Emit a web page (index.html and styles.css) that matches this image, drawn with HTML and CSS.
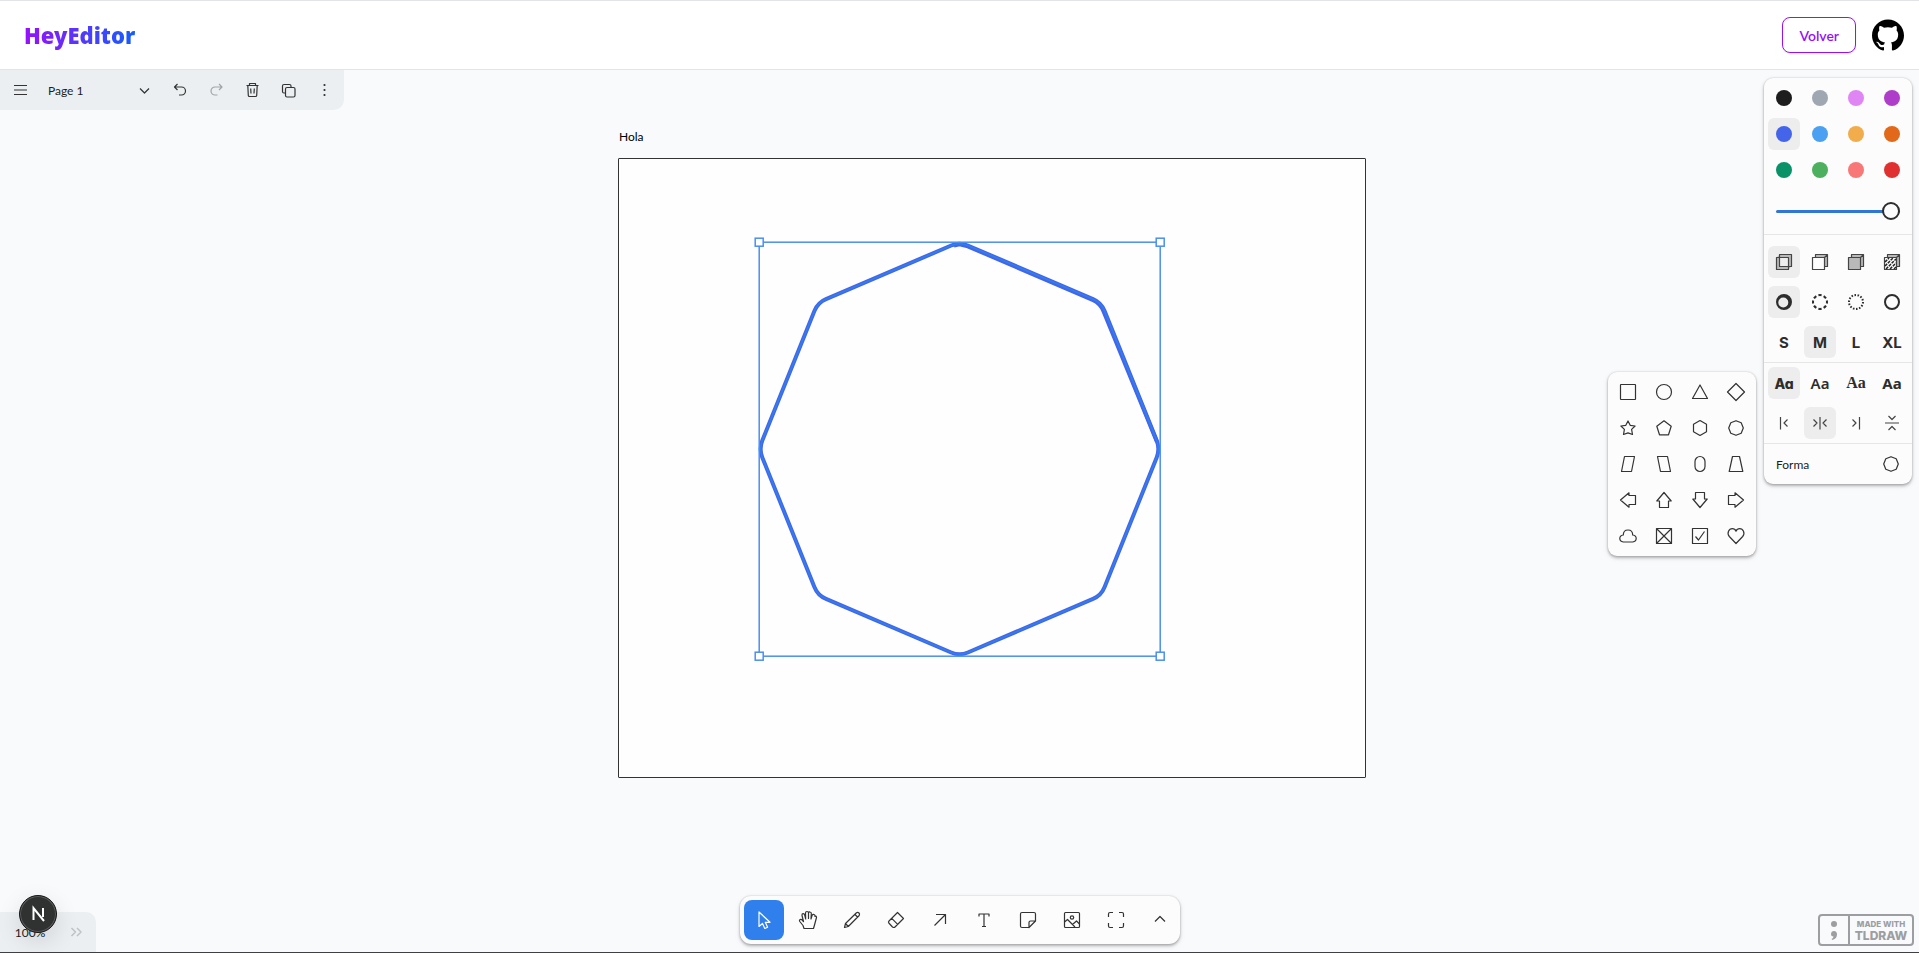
FILE: index.html
```
<!DOCTYPE html>
<html lang="es">
<head>
<meta charset="utf-8">
<title>HeyEditor</title>
<link rel="stylesheet" href="styles.css">
</head>
<body>
<header class="header">
  <a class="brand" href="#">HeyEditor</a>
  <div class="header-actions">
    <button class="back" type="button">Volver</button>
    <a class="github" href="#" aria-label="GitHub"><svg viewBox="0 0 24 24"><path d="M12 .297c-6.63 0-12 5.373-12 12 0 5.303 3.438 9.8 8.205 11.385.6.113.82-.258.82-.577 0-.285-.01-1.04-.015-2.04-3.338.724-4.042-1.61-4.042-1.61C4.422 18.07 3.633 17.7 3.633 17.7c-1.087-.744.084-.729.084-.729 1.205.084 1.838 1.236 1.838 1.236 1.07 1.835 2.809 1.305 3.495.998.108-.776.417-1.305.76-1.605-2.665-.3-5.466-1.332-5.466-5.93 0-1.31.465-2.38 1.235-3.22-.135-.303-.54-1.523.105-3.176 0 0 1.005-.322 3.3 1.23.96-.267 1.98-.399 3-.405 1.02.006 2.04.138 3 .405 2.28-1.552 3.285-1.23 3.285-1.23.645 1.653.24 2.873.12 3.176.765.84 1.23 1.91 1.23 3.22 0 4.61-2.805 5.625-5.475 5.92.42.36.81 1.096.81 2.22 0 1.606-.015 2.896-.015 3.286 0 .315.21.69.825.57C20.565 22.092 24 17.592 24 12.297c0-6.627-5.373-12-12-12"/></svg></a>
  </div>
</header>
<main class="editor">
  <div class="canvas">
    <div class="frame-label">Hola</div>
    <div class="frame"></div>
    <svg class="shape" viewBox="0 0 420 432">
      <path class="outline" d="M217.8 12.5L343 66.1Q351.3 69.6 354.6 78L406.7 207.6Q410 216 406.7 224.4L354.6 354Q351.3 362.4 343 365.9L217.8 419.5Q209.5 423 201.2 419.5L76 365.9Q67.7 362.4 64.4 354L12.3 224.4Q9 216 12.3 207.6L64.4 78Q67.7 69.6 76 66.1L201.2 12.5Q209.5 9 217.8 12.5Z"/>
      <path class="outline" d="M204 12.500L209.500 11.300L217.8 13.300L342.600 67Q350.500 70.500 353.600 78.500L407 209"/>
      <path class="inner" d="M217.8 12.5L343 66.1Q351.3 69.6 354.6 78L406.7 207.6Q410 216 406.7 224.4L354.6 354Q351.3 362.4 343 365.9L217.8 419.5Q209.5 423 201.2 419.5L76 365.9Q67.7 362.4 64.4 354L12.3 224.4Q9 216 12.3 207.6L64.4 78Q67.7 69.6 76 66.1L201.2 12.5Q209.5 9 217.8 12.5Z"/>
      <g class="selection"><rect x="9.2" y="9.2" width="401" height="414"/><rect class="handle" x="5.2" y="5.2" width="8" height="8"/><rect class="handle" x="406.2" y="5.2" width="8" height="8"/><rect class="handle" x="5.2" y="419.2" width="8" height="8"/><rect class="handle" x="406.2" y="419.2" width="8" height="8"/></g>
    </svg>
  </div>

  <nav class="menu-bar" aria-label="Menu">
    <button class="menu-main" type="button" aria-label="Menu"><svg class="icon" viewBox="0 0 24 24"><path d="M6 7.500H19M6 12H19M6 16.500H19"/></svg></button>
    <button class="page-menu" type="button"><span>Page 1</span><svg class="icon" viewBox="0 0 24 24"><path d="M8 10.500L12.500 15L17 10.500"/></svg></button>
    <button class="menu-btn" type="button" aria-label="Undo"><svg class="icon" viewBox="0 0 24 24"><path d="M9.500 6L6.500 9L9.500 12M6.500 9H13.500A4 4 0 0 1 13.500 17H11"/></svg></button>
    <button class="menu-btn" type="button" aria-label="Redo" disabled><svg class="icon" viewBox="0 0 24 24"><path d="M15 6L18 9L15 12M18 9H11A4 4 0 0 0 11 17H13.500"/></svg></button>
    <button class="menu-btn" type="button" aria-label="Delete"><svg class="icon" viewBox="0 0 24 24"><path d="M6.500 7.500H18.500M9.500 7.500V5.500H15.500V7.500M7.800 7.500L8.300 17.500Q8.300 18.500 9.500 18.500H15.500Q16.600 18.500 16.700 17.500L17.200 7.500M10.700 10.500L11 15.500M14.300 10.500L14 15.500"/></svg></button>
    <button class="menu-btn" type="button" aria-label="Duplicate"><svg class="icon" viewBox="0 0 24 24"><rect x="9.500" y="9.500" width="9.500" height="9.500" rx="1.500"/><path d="M9.500 15H8Q6.500 15 6.500 13.500V8Q6.500 6.500 8 6.500H13.500Q15 6.500 15 8V9.500"/></svg></button>
    <button class="menu-btn" type="button" aria-label="More"><svg class="icon solid" viewBox="0 0 24 24"><circle cx="12.500" cy="7" r="1.100"/><circle cx="12.500" cy="12" r="1.100"/><circle cx="12.500" cy="17" r="1.100"/></svg></button>
  </nav>

  <aside class="style-panel" aria-label="Styles">
    <section class="colors">
      <div class="grid tight">
        <button class="cell" type="button" aria-label="Black"><span class="dot black"></span></button>
        <button class="cell" type="button" aria-label="Grey"><span class="dot grey"></span></button>
        <button class="cell" type="button" aria-label="Light violet"><span class="dot light-violet"></span></button>
        <button class="cell" type="button" aria-label="Violet"><span class="dot violet"></span></button>
        <button class="cell active" type="button" aria-label="Blue"><span class="dot blue"></span></button>
        <button class="cell" type="button" aria-label="Light blue"><span class="dot light-blue"></span></button>
        <button class="cell" type="button" aria-label="Yellow"><span class="dot yellow"></span></button>
        <button class="cell" type="button" aria-label="Orange"><span class="dot orange"></span></button>
        <button class="cell" type="button" aria-label="Green"><span class="dot green"></span></button>
        <button class="cell" type="button" aria-label="Light green"><span class="dot light-green"></span></button>
        <button class="cell" type="button" aria-label="Light red"><span class="dot light-red"></span></button>
        <button class="cell" type="button" aria-label="Red"><span class="dot red"></span></button>
      </div>
      <input class="opacity" type="range" min="0" max="100" value="100" aria-label="Opacity">
    </section>
    <section class="grid strokes">
      <button class="cell active" type="button" aria-label="No fill"><svg class="icon" viewBox="0 0 24 24"><path class="shade" fill-rule="evenodd" d="M8 4.500H19.500V16L16.500 19.500H4.500V7.500ZM8 8V16H16V8Z"/><path class="thin" d="M4.500 7.500H16.500V19.500H4.500ZM7.500 7.500V4.500H19.500V16.500H16.500M7.500 7.500V16.500H16.500"/></svg></button>
      <button class="cell" type="button" aria-label="Semi fill"><svg class="icon" viewBox="0 0 24 24"><path class="shade" d="M7.500 4.500H19.500V16.500H16.500V7.500H7.500Z"/><path class="thin" d="M4.500 7.500H16.500V19.500H4.500ZM7.500 7.500V4.500H19.500V16.500H16.500M16.500 7.500L19.500 4.500"/></svg></button>
      <button class="cell" type="button" aria-label="Solid fill"><svg class="icon" viewBox="0 0 24 24"><path class="shade" d="M7.500 4.500H19.500V16.500H16.500V19.500H4.500V7.500H7.500Z"/><path class="thin" d="M4.500 7.500H16.500V19.500H4.500ZM7.500 7.500V4.500H19.500V16.500H16.500M16.500 7.500L19.500 4.500"/></svg></button>
      <button class="cell" type="button" aria-label="Pattern fill"><svg class="icon" viewBox="0 0 24 24"><path class="shade" d="M7.500 4.500H19.500V16.500H16.500V7.500H7.500Z"/><path class="thin" d="M4.500 7.500H16.500V19.500H4.500ZM7.500 7.500V4.500H19.500V16.500H16.500M16.500 7.500L19.500 4.500"/><path class="hatch" d="M5 12L9 8M5 16L13 8M6 19L16 9M10 19L16 13M14 19L16 17"/></svg></button>
      <button class="cell active" type="button" aria-label="Draw"><svg class="icon solid" viewBox="0 0 24 24"><path fill-rule="evenodd" d="M12 4A8 8 0 1 0 12 20A8 8 0 1 0 12 4ZM11.300 7.500A5 5 0 1 1 11.300 17.500A5 5 0 1 1 11.300 7.500Z"/></svg></button>
      <button class="cell" type="button" aria-label="Dashed"><svg class="icon" viewBox="0 0 24 24"><circle class="bold" cx="12" cy="12" r="7" pathLength="80" stroke-dasharray="6 4" stroke-dashoffset="3"/></svg></button>
      <button class="cell" type="button" aria-label="Dotted"><svg class="icon" viewBox="0 0 24 24"><circle class="bold" cx="12" cy="12" r="7" pathLength="84" stroke-dasharray="3 3"/></svg></button>
      <button class="cell" type="button" aria-label="Solid"><svg class="icon" viewBox="0 0 24 24"><circle class="bold" cx="12" cy="12" r="7"/></svg></button>
      <button class="cell size" type="button">S</button>
      <button class="cell size active" type="button">M</button>
      <button class="cell size" type="button">L</button>
      <button class="cell size" type="button">XL</button>
    </section>
    <section class="grid fonts">
      <button class="cell font-draw active" type="button">Aa</button>
      <button class="cell font-sans" type="button">Aa</button>
      <button class="cell font-serif" type="button">Aa</button>
      <button class="cell font-mono" type="button">Aa</button>
      <button class="cell" type="button" aria-label="Align start"><svg class="icon" viewBox="0 0 24 24"><path d="M8.500 6V18.500M15.500 8.500L12 12L15.500 15.500"/></svg></button>
      <button class="cell active" type="button" aria-label="Align middle"><svg class="icon" viewBox="0 0 24 24"><path d="M12 6V18.500M5.500 8.500L9 12L5.500 15.500M18.500 8.500L15 12L18.500 15.500"/></svg></button>
      <button class="cell" type="button" aria-label="Align end"><svg class="icon" viewBox="0 0 24 24"><path d="M15.500 6V18.500M8.500 8.500L12 12L8.500 15.500"/></svg></button>
      <button class="cell" type="button" aria-label="Vertical align"><svg class="icon" viewBox="0 0 24 24"><path d="M5 12H19M8.500 5L12 8.500L15.500 5M8.500 19L12 15.500L15.500 19"/></svg></button>
    </section>
    <button class="shape-row" type="button"><span>Forma</span><svg class="icon" viewBox="0 0 24 24"><path d="M12 4.700L17.200 6.800L19.300 12L17.200 17.200L12 19.300L6.800 17.200L4.700 12L6.800 6.800Z"/></svg></button>
  </aside>

  <div class="shape-menu grid tight" role="group" aria-label="Forma">
    <button class="cell" type="button" aria-label="Rectangle"><svg class="icon" viewBox="0 0 24 24"><rect x="4.500" y="4.500" width="15" height="15" rx=".5"/></svg></button>
    <button class="cell" type="button" aria-label="Ellipse"><svg class="icon" viewBox="0 0 24 24"><circle cx="12" cy="12" r="7.500"/></svg></button>
    <button class="cell" type="button" aria-label="Triangle"><svg class="icon" viewBox="0 0 24 24"><path d="M12 5L19.500 18.500H4.500Z"/></svg></button>
    <button class="cell" type="button" aria-label="Diamond"><svg class="icon" viewBox="0 0 24 24"><path d="M12 3.500L20.500 12L12 20.500L3.500 12Z"/></svg></button>
    <button class="cell" type="button" aria-label="Star"><svg class="icon" viewBox="0 0 24 24"><path d="M12 5L14.200 9.300L19.100 10L15.600 13.400L16.500 18.500L12 16.900L7.500 18.500L8.400 13.400L4.900 10L9.800 9.300Z"/></svg></button>
    <button class="cell" type="button" aria-label="Pentagon"><svg class="icon" viewBox="0 0 24 24"><path d="M12 4.800L19.200 10.200L16.500 18.800H7.500L4.800 10.200Z"/></svg></button>
    <button class="cell" type="button" aria-label="Hexagon"><svg class="icon" viewBox="0 0 24 24"><path d="M12 4.500L18.500 8.200V15.700L12 19.500L5.500 15.700V8.200Z"/></svg></button>
    <button class="cell" type="button" aria-label="Octagon"><svg class="icon" viewBox="0 0 24 24"><path d="M12 4.700L17.200 6.800L19.300 12L17.200 17.200L12 19.300L6.800 17.200L4.700 12L6.800 6.800Z"/></svg></button>
    <button class="cell" type="button" aria-label="Rhombus"><svg class="icon" viewBox="0 0 24 24"><path d="M8.500 4.500H18.500L15.500 19.500H5.500Z"/></svg></button>
    <button class="cell" type="button" aria-label="Rhombus 2"><svg class="icon" viewBox="0 0 24 24"><path d="M5.500 4.500H15.500L18.500 19.500H8.500Z"/></svg></button>
    <button class="cell" type="button" aria-label="Oval"><svg class="icon" viewBox="0 0 24 24"><rect x="7" y="4.500" width="10" height="15" rx="5"/></svg></button>
    <button class="cell" type="button" aria-label="Trapezoid"><svg class="icon" viewBox="0 0 24 24"><path d="M8.500 4.500H15.500L18.800 19.500H5.200Z"/></svg></button>
    <button class="cell" type="button" aria-label="Arrow left"><svg class="icon" viewBox="0 0 24 24"><path d="M4.500 12L13 4.800V7.500H19.500V16.500H13V19.200Z"/></svg></button>
    <button class="cell" type="button" aria-label="Arrow up"><svg class="icon" viewBox="0 0 24 24"><path d="M12 4.500L19.200 13H16.500V19.500H7.500V13H4.800Z"/></svg></button>
    <button class="cell" type="button" aria-label="Arrow down"><svg class="icon" viewBox="0 0 24 24"><path d="M12 19.500L19.200 11H16.500V4.500H7.500V11H4.800Z"/></svg></button>
    <button class="cell" type="button" aria-label="Arrow right"><svg class="icon" viewBox="0 0 24 24"><path d="M19.500 12L11 4.800V7.500H4.500V16.500H11V19.200Z"/></svg></button>
    <button class="cell" type="button" aria-label="Cloud"><svg class="icon" viewBox="0 0 24 24"><path d="M7.300 18Q3.800 17.500 3.800 14.500Q3.800 11.500 7.300 11C7.300 7.500 9.500 6 12 6C14.500 6 16.700 7.500 16.700 11Q20.200 11.500 20.200 14.500Q20.200 17.500 16.700 18Z"/></svg></button>
    <button class="cell" type="button" aria-label="X box"><svg class="icon" viewBox="0 0 24 24"><path d="M4.500 4.500H19.500V19.500H4.500ZM4.500 4.500L19.500 19.500M19.500 4.500L4.500 19.500"/></svg></button>
    <button class="cell" type="button" aria-label="Check box"><svg class="icon" viewBox="0 0 24 24"><path d="M4.500 4.500H19.500V19.500H4.500ZM7.500 12.500L10.500 16L16.500 7.500"/></svg></button>
    <button class="cell" type="button" aria-label="Heart"><svg class="icon" viewBox="0 0 24 24"><path d="M12 19.500L5.300 12.500C2.500 9.200 5 4.700 8.300 4.700Q11 4.700 12 7.200Q13 4.700 15.700 4.700C19 4.700 21.500 9.200 18.700 12.500Z"/></svg></button>
  </div>

  <div class="toolbar" role="toolbar" aria-label="Tools">
    <button class="tool selected" type="button" aria-label="Select"><svg class="icon" viewBox="0 0 24 24"><path d="M7 4V18.500L10.500 15.500L12.800 20.500L15.600 19.200L13.300 14.300H18Z"/></svg></button>
    <button class="tool" type="button" aria-label="Hand"><svg class="icon" viewBox="0 0 24 24"><path d="M8 20.500L7 17.500L3.800 13.500Q3 12 4.200 11.500Q5.500 11 6.500 12.500L7.500 13.500L6 7.500Q5.800 6 7 5.700Q8.200 5.500 8.700 7L9.700 11L9.500 5Q9.500 3.500 11 3.500Q12.500 3.500 12.500 5V10.500V5Q12.800 3.800 14 4Q15.400 4.200 15.300 5.500L15 11L16 7.500Q16.700 6.200 18 6.500Q19.300 7 19 8.500Q20.500 7.500 20.500 9.500L18.500 17L17.500 20.500Z"/></svg></button>
    <button class="tool" type="button" aria-label="Draw"><svg class="icon" viewBox="0 0 24 24"><path d="M4.500 19.500L5.500 15.500L16.500 4.800Q17.800 4 19 5Q20 6.200 19.200 7.500L8.300 18.500ZM5.500 15.500L8.300 18.500M15 6.500L17.500 9M4.500 19.500L6.500 19"/></svg></button>
    <button class="tool" type="button" aria-label="Eraser"><svg class="icon" viewBox="0 0 24 24"><path d="M13.500 4.500L19.500 10.500L11 19Q10 20 8.500 19L4.800 15Q4 14 5 13ZM7.700 10.300L13.700 16.300"/></svg></button>
    <button class="tool" type="button" aria-label="Arrow"><svg class="icon" viewBox="0 0 24 24"><path d="M6.500 17.500L17.500 6.500M8 6.500H17.500V16"/></svg></button>
    <button class="tool" type="button" aria-label="Text"><svg class="icon" viewBox="0 0 24 24"><path d="M7 8.500V6H17V8.500M12 6V18.500M10 18.500H14"/></svg></button>
    <button class="tool" type="button" aria-label="Note"><svg class="icon" viewBox="0 0 24 24"><path d="M12.500 19.500H6Q4.500 19.500 4.500 18V6Q4.500 4.500 6 4.500H18Q19.500 4.500 19.500 6V13L13 19.500V14.500Q13 13 14.500 13H19.500"/></svg></button>
    <button class="tool" type="button" aria-label="Image"><svg class="icon" viewBox="0 0 24 24"><rect x="4.500" y="4.500" width="15" height="15" rx="1"/><circle cx="12" cy="9.500" r="1.700"/><path d="M4.500 14L7.500 11.500L15 19M12.500 16.500L16.500 13L19.500 16"/></svg></button>
    <button class="tool" type="button" aria-label="Frame"><svg class="icon" viewBox="0 0 24 24"><path d="M4.500 9V6Q4.500 4.500 6 4.500H9M15 4.500H18Q19.500 4.500 19.500 6V9M19.500 15V18Q19.500 19.500 18 19.500H15M9 19.500H6Q4.500 19.500 4.500 18V15"/></svg></button>
    <button class="tool" type="button" aria-label="More tools"><svg class="icon" viewBox="0 0 24 24"><path d="M7 13.500L12 8.500L17 13.500"/></svg></button>
  </div>

  <div class="zoom-bar">
    <button class="zoom-menu" type="button">100%</button>
    <button class="zoom-toggle" type="button" aria-label="Minimap"><svg class="icon" viewBox="0 0 24 24"><path d="M7.500 8L11.500 12L7.500 16M13 8L17 12L13 16"/></svg></button>
  </div>
  <button class="dev-badge" type="button" aria-label="Next.js"><svg viewBox="0 0 36 36"><path d="M13.500 24V12L24 25M23 12V21"/></svg></button>
  <a class="watermark" href="#"><svg viewBox="0 0 28 28"><circle cx="14" cy="8" r="3"/><path d="M14 15Q17 15 17 18.500Q17 22.500 12.500 24L11.500 23Q13.500 22 13.500 20.500Q11 20.500 11 18Q11.200 15 14 15Z"/></svg><span class="mark-text"><span class="mark-small">MADE WITH</span><span class="mark-big">TLDRAW</span></span></a>
</main>
</body>
</html>
```
FILE: styles.css
```
* { box-sizing: border-box; }
body {
  margin: 0;
  height: 100vh;
  display: flex;
  flex-direction: column;
  overflow: hidden;
  background: #f9fafb;
  color: #1d1d1d;
  font-family: Lato, sans-serif;
  font-size: 12px;
}
button {
  border: 0;
  padding: 0;
  margin: 0;
  background: none;
  color: inherit;
  font: inherit;
}
a { color: inherit; text-decoration: none; }
.icon {
  width: 24px;
  height: 24px;
  flex: none;
  display: block;
  fill: none;
  stroke: #333;
  stroke-width: 1.2;
  stroke-linejoin: round;
}
.solid { fill: #2d2d2d; stroke: none; }
.header {
  height: 70px;
  flex: none;
  display: flex;
  align-items: center;
  justify-content: space-between;
  padding: 0 15px 0 24px;
  background: #fff;
  border-top: 1px solid #e2e4e9;
  border-bottom: 1px solid #e2e4e9;
}
.brand {
  font-family: "Noto Sans", sans-serif;
  font-size: 22px;
  line-height: 32px;
  font-weight: 900;
  color: transparent;
  background: linear-gradient(90deg, #9810fa, #155dfc);
  background-clip: text;
}
.header-actions { display: flex; align-items: center; gap: 16px; }
.back {
  height: 36px;
  padding: 0 16px;
  border: 1px solid #9810fa;
  border-radius: 8px;
  background: #fff;
  color: #9810fa;
  font-size: 14px;
  font-weight: 600;
  box-shadow: 0 1px 2px rgba(0, 0, 0, .08);
}
.github, .github svg { display: block; width: 32px; height: 32px; }
.editor {
  position: relative;
  flex: 1;
  border-bottom: 1px solid #3f3f46;
}
.canvas { position: absolute; inset: 0; overflow: hidden; background: #f9fafc; }
.frame-label { position: absolute; left: 619px; top: 59px; line-height: 16px; color: #000; }
.frame {
  position: absolute;
  left: 618px;
  top: 88px;
  width: 748px;
  height: 620px;
  background: #fefefe;
  border: 1px solid #333;
  border-radius: 1px;
}
.shape { position: absolute; left: 750px; top: 163px; width: 420px; height: 432px; fill: none; }
.outline { stroke: #4465e9; stroke-width: 4; }
.inner { stroke: #2f80ed; stroke-width: 1.5; }
.selection { stroke: #4a8ff0; stroke-width: 1.5; }
.handle { fill: #fff; }

.menu-bar {
  position: absolute;
  left: 0;
  top: 0;
  height: 40px;
  display: flex;
  padding-right: 2px;
  background: #eceff2;
  border-radius: 0 0 10px 0;
}
.menu-bar button { display: flex; align-items: center; justify-content: center; }
.menu-main { width: 40px; }
.menu-bar .page-menu { width: 122px; padding: 0 6px 0 8px; justify-content: space-between; }
.menu-btn { width: 36px; }
.menu-btn:disabled { opacity: .4; }

.style-panel, .shape-menu, .toolbar {
  position: absolute;
  background: #fcfcfc;
  border-radius: 9px;
  box-shadow: 0 0 2px rgba(0, 0, 0, .2), 0 2px 3px rgba(0, 0, 0, .24), 0 2px 6px rgba(0, 0, 0, .08);
}
.style-panel { right: 7px; top: 8px; width: 148px; }
.grid { display: grid; grid-template-columns: repeat(4, 32px); gap: 8px 4px; }
.tight { row-gap: 4px; }
.colors { padding: 4px 4px 0; }
.strokes, .fonts { padding: 4px; border-top: 1px solid #e6e6e6; }
.strokes { padding-top: 11px; }
.cell {
  width: 32px;
  height: 32px;
  display: flex;
  align-items: center;
  justify-content: center;
  border-radius: 6px;
  color: #2d2d2d;
}
.active { background: #ededed; }
.dot { width: 16px; height: 16px; border-radius: 50%; }
.black { background: #1d1d1d; }
.grey { background: #9fa8b2; }
.light-violet { background: #e085f4; }
.violet { background: #ae3ec9; }
.blue { background: #4465e9; }
.light-blue { background: #4ba1f1; }
.yellow { background: #f1ac4b; }
.orange { background: #e16919; }
.green { background: #099268; }
.light-green { background: #4cb05e; }
.light-red { background: #f87777; }
.red { background: #e03131; }
.opacity {
  display: block;
  appearance: none;
  width: 124px;
  height: 48px;
  margin: 0 8px;
  padding-top: 2px;
  background: none;
}
.opacity::-webkit-slider-runnable-track { height: 3px; border-radius: 2px; background: #2f76d8; }
.opacity::-webkit-slider-thumb {
  appearance: none;
  width: 18px;
  height: 18px;
  margin-top: -8px;
  border: 2px solid #2d2d2d;
  border-radius: 50%;
  background: #fcfcfc;
}
.shade { fill: #b9b9b9; stroke: none; }
.thin { stroke: #444; }
.hatch { stroke: #222; stroke-width: 1.5; stroke-dasharray: 3 1; }
.bold { stroke: #2d2d2d; stroke-width: 2; }
.size { font-family: Inter, sans-serif; font-size: 15px; font-weight: 700; }
.font-draw { font-family: Inter, sans-serif; font-size: 14px; font-weight: 800; font-feature-settings: "cv11"; }
.font-sans { font-family: "Noto Sans", sans-serif; font-size: 15px; font-weight: 600; }
.font-serif { font-family: "Liberation Serif", serif; font-size: 16px; font-weight: 700; }
.font-mono { font-family: "Noto Sans", sans-serif; font-size: 15px; font-weight: 700; }
.fonts .icon { stroke: #444; }
.shape-row {
  width: 100%;
  height: 41px;
  display: flex;
  align-items: center;
  justify-content: space-between;
  padding: 0 9px 0 12px;
  border-top: 1px solid #e6e6e6;
}
.shape-menu { right: 163px; top: 302px; padding: 4px; }

.toolbar {
  left: 50%;
  bottom: 8px;
  transform: translateX(-50%);
  display: flex;
  gap: 4px;
  padding: 4px 0 4px 4px;
  border-radius: 11px;
}
.tool {
  width: 40px;
  height: 40px;
  display: flex;
  align-items: center;
  justify-content: center;
  border-radius: 8px;
}
.selected { background: #2f80ed; }
.selected .icon { stroke: #fff; }

.zoom-bar {
  position: absolute;
  left: 0;
  bottom: 0;
  height: 40px;
  display: flex;
  background: #eceff2;
  border-radius: 0 10px 0 0;
}
.zoom-menu { width: 60px; }
.zoom-toggle { width: 36px; display: flex; align-items: center; padding-left: 4px; }
.zoom-toggle .icon { stroke: #bfc1c4; stroke-width: 1.5; }
.dev-badge {
  position: absolute;
  left: 19px;
  bottom: 19px;
  width: 38px;
  height: 38px;
  border: 1px solid #171717;
  border-radius: 50%;
  background: #2f3231;
  box-shadow: inset 0 0 0 1px #5c5e5d, 0 8px 24px rgba(0, 0, 0, .12);
}
.dev-badge svg { display: block; width: 36px; height: 36px; fill: none; stroke: #fff; stroke-width: 2; }
.watermark {
  position: absolute;
  right: 5px;
  bottom: 6px;
  width: 96px;
  height: 32px;
  display: flex;
  border: 2px solid #9c9ea1;
  border-radius: 4px;
  color: #9c9ea1;
  font-family: Inter, sans-serif;
  font-weight: 800;
}
.watermark svg { width: 28px; height: 28px; fill: #9c9ea1; }
.mark-text {
  flex: 1;
  display: flex;
  flex-direction: column;
  align-items: center;
  justify-content: center;
  border-left: 2px solid #9c9ea1;
}
.mark-small { font-size: 8px; line-height: 11px; white-space: nowrap; }
.mark-big { font-size: 12px; line-height: 12px; }
```
